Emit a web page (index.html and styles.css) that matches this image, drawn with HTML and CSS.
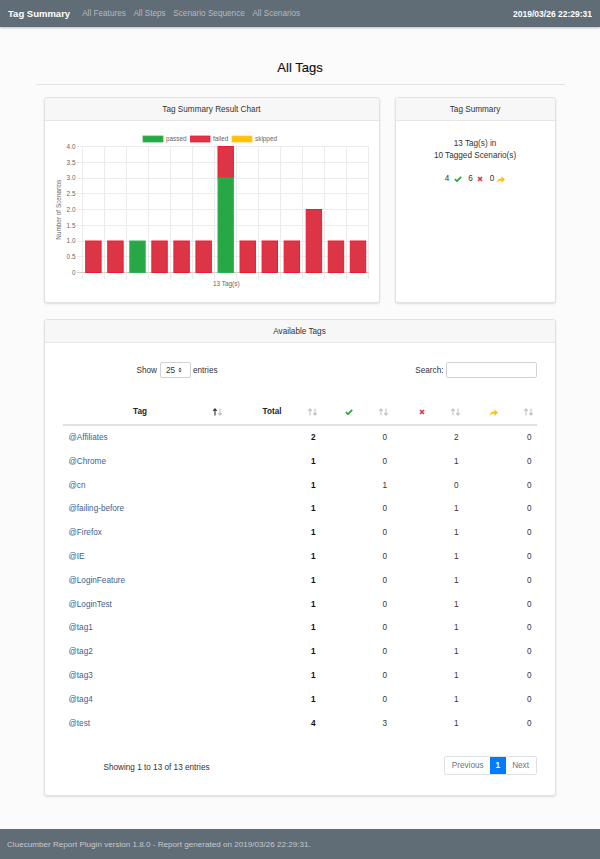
FILE: index.html
```html
<!DOCTYPE html>
<html lang="en">
<head>
<meta charset="utf-8">
<title>Tag Summary</title>
<link rel="stylesheet" href="styles.css">
</head>
<body>
<nav class="topbar">
  <a class="brand">Tag Summary</a>
  <div class="nav-links">
    <a>All Features</a>
    <a>All Steps</a>
    <a>Scenario Sequence</a>
    <a>All Scenarios</a>
  </div>
  <span class="stamp">2019/03/26 22:29:31</span>
</nav>

<main class="container">
  <h1 class="page-title">All Tags</h1>
  <hr class="rule">

  <div class="top-row">
    <section class="card chart-card">
      <header class="card-header">Tag Summary Result Chart</header>
      <div class="chart-body">
        <svg class="chart" viewBox="45 121 334 181" width="334" height="181">
          <g class="legend">
            <rect x="143" y="136" width="20" height="6" fill="#28a745" stroke="#2fb34e" stroke-width="0.8"/>
            <text x="166" y="141">passed</text>
            <rect x="190.5" y="136" width="19.5" height="6" fill="#dc3545" stroke="#ee1b2e" stroke-width="0.8"/>
            <text x="213" y="141">failed</text>
            <rect x="232" y="136" width="20" height="6" fill="#ffc107" stroke="#ffcb2e" stroke-width="0.8"/>
            <text x="255" y="141">skipped</text>
          </g>
          <g class="grid">
            <path d="M77 146.5H369M77 162.5H369M77 178.5H369M77 193.5H369M77 209.5H369M77 225.5H369M77 241.5H369M77 256.5H369"/>
            <path d="M82.5 146.5V279M104.5 146.5V279M126.5 146.5V279M148.5 146.5V279M170.5 146.5V279M192.5 146.5V279M214.5 146.5V279M236.5 146.5V279M258.5 146.5V279M280.5 146.5V279M302.5 146.5V279M324.5 146.5V279M346.5 146.5V279M368.5 146.5V279"/>
          </g>
          <path class="zero" d="M77 272.5H369"/>
          <g class="ticks">
            <text x="75.5" y="148.8">4.0</text>
            <text x="75.5" y="164.6">3.5</text>
            <text x="75.5" y="180.3">3.0</text>
            <text x="75.5" y="196.1">2.5</text>
            <text x="75.5" y="211.8">2.0</text>
            <text x="75.5" y="227.6">1.5</text>
            <text x="75.5" y="243.3">1.0</text>
            <text x="75.5" y="259.1">0.5</text>
            <text x="75.5" y="274.8">0</text>
          </g>
          <g class="bars-failed">
            <rect x="85.7" y="241" width="15.4" height="31.5"/>
            <rect x="107.75" y="241" width="15.4" height="31.5"/>
            <rect x="151.85" y="241" width="15.4" height="31.5"/>
            <rect x="173.9" y="241" width="15.4" height="31.5"/>
            <rect x="195.95" y="241" width="15.4" height="31.5"/>
            <rect x="218" y="146.5" width="15.4" height="31.5"/>
            <rect x="240.05" y="241" width="15.4" height="31.5"/>
            <rect x="262.1" y="241" width="15.4" height="31.5"/>
            <rect x="284.15" y="241" width="15.4" height="31.5"/>
            <rect x="306.2" y="209.5" width="15.4" height="63"/>
            <rect x="328.25" y="241" width="15.4" height="31.5"/>
            <rect x="350.3" y="241" width="15.4" height="31.5"/>
          </g>
          <g class="bars-passed">
            <rect x="129.8" y="241" width="15.4" height="31.5"/>
            <rect x="218" y="178" width="15.4" height="94.5"/>
          </g>
          <text class="axis-label" x="226.3" y="285.6" text-anchor="middle">13 Tag(s)</text>
          <text class="axis-label" x="59" y="212" text-anchor="middle" transform="rotate(-90 59 209.7)">Number of Scenarios</text>
        </svg>
      </div>
    </section>

    <section class="card summary-card">
      <header class="card-header">Tag Summary</header>
      <div class="summary-body">
        <p class="summary-text">13 Tag(s) in<br>10 Tagged Scenario(s)</p>
        <div class="counts">
          <span>4</span>
          <svg class="ic ic-check" viewBox="0 0 8 6" width="8" height="6"><path d="M0.8 3.1L3 5.1L7.2 0.8"/></svg>
          <span>6</span>
          <svg class="ic ic-x" viewBox="0 0 6 6" width="6" height="6"><path d="M1 1L5 5M5 1L1 5"/></svg>
          <span>0</span>
          <svg class="ic ic-skip" viewBox="0 0 9 7" width="9" height="7"><path d="M0.5 7C0.8 4 2.8 2.6 5.5 2.6V0.3L9 3.6L5.5 6.9V4.6C3.4 4.6 1.7 5.3 0.5 7Z"/></svg>
        </div>
      </div>
    </section>
  </div>

  <section class="card tags-card">
    <header class="card-header">Available Tags</header>
    <div class="tags-body">
      <div class="controls">
        <div class="length">
          <span>Show</span>
          <span class="select-box"><span>25</span>
            <svg class="caret" viewBox="0 0 4 6" width="4" height="6"><path d="M0.3 2.4L2 0.6L3.7 2.4ZM0.3 3.6L2 5.4L3.7 3.6Z"/></svg>
          </span>
          <span>entries</span>
        </div>
        <label class="filter">Search: <input class="search" type="text"></label>
      </div>

      <table class="tags-table">
        <colgroup>
          <col class="c-tag"><col class="c-total"><col class="c-num"><col class="c-num"><col class="c-skip">
        </colgroup>
        <thead>
          <tr>
            <th class="th-tag"><div class="th-in"><span class="lbl">Tag</span>
              <svg class="sort asc" viewBox="0 0 9 8" width="9" height="8"><path class="up" d="M2 7.5V1M0.3 2.8L2 0.9L3.7 2.8"/><path class="down" d="M7 0.5V7M5.3 5.2L7 7.1L8.7 5.2"/></svg></div></th>
            <th><div class="th-in num"><span class="lbl">Total</span>
              <svg class="sort" viewBox="0 0 9 8" width="9" height="8"><path class="up" d="M2 7.5V1M0.3 2.8L2 0.9L3.7 2.8"/><path class="down" d="M7 0.5V7M5.3 5.2L7 7.1L8.7 5.2"/></svg></div></th>
            <th><div class="th-in num"><svg class="ic ic-check" viewBox="0 0 8 6" width="8" height="6"><path d="M0.8 3.1L3 5.1L7.2 0.8"/></svg>
              <svg class="sort" viewBox="0 0 9 8" width="9" height="8"><path class="up" d="M2 7.5V1M0.3 2.8L2 0.9L3.7 2.8"/><path class="down" d="M7 0.5V7M5.3 5.2L7 7.1L8.7 5.2"/></svg></div></th>
            <th><div class="th-in num"><svg class="ic ic-x" viewBox="0 0 6 6" width="6" height="6"><path d="M1 1L5 5M5 1L1 5"/></svg>
              <svg class="sort" viewBox="0 0 9 8" width="9" height="8"><path class="up" d="M2 7.5V1M0.3 2.8L2 0.9L3.7 2.8"/><path class="down" d="M7 0.5V7M5.3 5.2L7 7.1L8.7 5.2"/></svg></div></th>
            <th><div class="th-in num"><svg class="ic ic-skip" viewBox="0 0 9 7" width="9" height="7"><path d="M0.5 7C0.8 4 2.8 2.6 5.5 2.6V0.3L9 3.6L5.5 6.9V4.6C3.4 4.6 1.7 5.3 0.5 7Z"/></svg>
              <svg class="sort" viewBox="0 0 9 8" width="9" height="8"><path class="up" d="M2 7.5V1M0.3 2.8L2 0.9L3.7 2.8"/><path class="down" d="M7 0.5V7M5.3 5.2L7 7.1L8.7 5.2"/></svg></div></th>
          </tr>
        </thead>
        <tbody>
          <tr><td><a class="tag">@Affiliates</a></td><td class="total">2</td><td>0</td><td>2</td><td>0</td></tr>
          <tr><td><a class="tag">@Chrome</a></td><td class="total">1</td><td>0</td><td>1</td><td>0</td></tr>
          <tr><td><a class="tag">@cn</a></td><td class="total">1</td><td>1</td><td>0</td><td>0</td></tr>
          <tr><td><a class="tag">@failing-before</a></td><td class="total">1</td><td>0</td><td>1</td><td>0</td></tr>
          <tr><td><a class="tag">@Firefox</a></td><td class="total">1</td><td>0</td><td>1</td><td>0</td></tr>
          <tr><td><a class="tag">@IE</a></td><td class="total">1</td><td>0</td><td>1</td><td>0</td></tr>
          <tr><td><a class="tag">@LoginFeature</a></td><td class="total">1</td><td>0</td><td>1</td><td>0</td></tr>
          <tr><td><a class="tag">@LoginTest</a></td><td class="total">1</td><td>0</td><td>1</td><td>0</td></tr>
          <tr><td><a class="tag">@tag1</a></td><td class="total">1</td><td>0</td><td>1</td><td>0</td></tr>
          <tr><td><a class="tag">@tag2</a></td><td class="total">1</td><td>0</td><td>1</td><td>0</td></tr>
          <tr><td><a class="tag">@tag3</a></td><td class="total">1</td><td>0</td><td>1</td><td>0</td></tr>
          <tr><td><a class="tag">@tag4</a></td><td class="total">1</td><td>0</td><td>1</td><td>0</td></tr>
          <tr><td><a class="tag">@test</a></td><td class="total">4</td><td>3</td><td>1</td><td>0</td></tr>
        </tbody>
      </table>

      <div class="table-foot">
        <div class="info">Showing 1 to 13 of 13 entries</div>
        <div class="pagination">
          <span class="page disabled">Previous</span>
          <span class="page active">1</span>
          <span class="page disabled">Next</span>
        </div>
      </div>
    </div>
  </section>
</main>

<footer class="footer">Cluecumber Report Plugin version 1.8.0 - Report generated on 2019/03/26 22:29:31.</footer>
</body>
</html>
```

FILE: styles.css
```css
* { box-sizing: border-box; }
html, body { margin: 0; }
body {
  background: #fbfbfb;
  font-family: "Liberation Sans", Arial, sans-serif;
  font-size: 8.2px;
  color: #333;
  min-height: 100vh;
  display: flex;
  flex-direction: column;
}

/* top navigation */
.topbar {
  flex: none;
  height: 27px;
  background: #606c76;
  display: flex;
  align-items: center;
  padding: 0 8px;
  box-shadow: 0 1px 2px rgba(0, 0, 0, 0.25);
}
.brand { color: #fff; font-weight: bold; font-size: 9.5px; margin-right: 12px; }
.nav-links { display: flex; gap: 7.6px; }
.nav-links a { color: #b5bbc0; font-size: 8.2px; }
.stamp { margin-left: auto; color: #fff; font-weight: bold; font-size: 8.5px; }

/* page */
.container { flex: none; width: 529px; margin: 0 auto; padding-top: 32.5px; }
.page-title {
  margin: 0;
  font-size: 13px;
  line-height: 16px;
  font-weight: normal;
  text-align: center;
  color: #111;
  -webkit-text-stroke: 0.15px #111;
}
.rule { margin: 8.5px 0 0; border: 0; border-top: 1px solid #e4e4e4; height: 0; }

.card {
  background: #fff;
  border: 1px solid #e2e2e2;
  border-radius: 3px;
  box-shadow: 0 1px 2px rgba(0, 0, 0, 0.12);
  overflow: hidden;
}
.card-header {
  height: 23px;
  padding-top: 2px;
  line-height: 20px;
  background: #f7f7f7;
  border-bottom: 1px solid #e6e6e6;
  text-align: center;
  color: #333;
}

.top-row {
  display: flex;
  gap: 15px;
  margin-top: 12px;
  padding: 0 9px 0 8px;
  height: 206px;
}
.chart-card { width: 336px; }
.summary-card { width: 161px; }

.chart-body { height: 181px; }
.chart { display: block; }
.chart text { font-family: "Liberation Sans", Arial, sans-serif; font-size: 6.4px; fill: #666; }
.chart .ticks text { text-anchor: end; }
.chart .grid path { stroke: #ebebeb; stroke-width: 1; fill: none; }
.chart .zero { stroke: #cfcfcf; stroke-width: 1; fill: none; }
.chart .bars-failed rect { fill: #dc3545; stroke: #ee1b2e; stroke-width: 1; }
.chart .bars-passed rect { fill: #28a745; stroke: #2fb34e; stroke-width: 1; }

.summary-body { text-align: center; padding-top: 16.5px; line-height: 12.3px; }
.summary-text { margin: 0; }
.counts {
  display: flex;
  justify-content: center;
  align-items: center;
  gap: 4px;
  margin-top: 11px;
  height: 12.3px;
}
.counts .ic-check { margin-left: 1px; margin-right: 2px; }
.counts .ic-x { margin-right: 3px; }
.counts .ic-skip { margin-left: -2px; }

.ic { display: block; }
.ic-check path { fill: none; stroke: #28a745; stroke-width: 1.8; }
.ic-x path { fill: none; stroke: #dc3545; stroke-width: 1.6; }
.ic-skip path { fill: #ffc107; }

/* available tags */
.tags-card { margin: 16px 9px 0 8px; }
.tags-body { padding: 19px 18px 20px; }

.controls { display: flex; justify-content: space-between; align-items: center; height: 16px; }
.length { display: flex; align-items: center; gap: 3px; padding-left: 74px; }
.select-box {
  width: 31px;
  height: 16px;
  border: 1px solid #d2d2d2;
  border-radius: 2px;
  display: flex;
  align-items: center;
  justify-content: space-between;
  padding: 0 8px 0 5px;
  margin-right: -1px;
}
.caret { display: block; }
.caret path { fill: #555; }
.filter { display: flex; align-items: center; gap: 2px; }
.search {
  width: 91px;
  height: 16px;
  border: 1px solid #d2d2d2;
  border-radius: 2px;
  margin: 0;
  padding: 0 4px;
  font: inherit;
  background: #fff;
}

.tags-table {
  width: 100%;
  margin-top: 21px;
  border-collapse: collapse;
  table-layout: fixed;
}
.c-tag { width: 163px; }
.c-total { width: 95px; }
.c-num { width: 71.5px; }
.c-skip { width: 73px; }

.tags-table th {
  padding: 8px 4px 7px 5px;
  line-height: 10px;
  border-bottom: 2px solid #dee2e6;
  font-weight: bold;
  color: #212529;
}
.th-in { display: flex; align-items: center; height: 10px; }
.th-tag .lbl { flex: 1; text-align: center; }
.th-in.num { justify-content: flex-end; gap: 26px; }
.sort { display: block; }
.sort path { fill: none; stroke: #c2c2c2; stroke-width: 1.1; }
.sort.asc .up { stroke: #333; }

.tags-table td {
  padding: 7px 5px;
  line-height: 9.8px;
  text-align: right;
  color: #333;
}
.tags-table td:first-child { text-align: left; padding-left: 6px; }
.tags-table td.total { font-weight: bold; color: #111; }
.tag { color: #3e5f8e; }

.table-foot {
  display: flex;
  justify-content: space-between;
  align-items: center;
  margin-top: 21px;
}
.info { padding-left: 41px; padding-top: 4px; }
.pagination {
  display: flex;
  height: 19px;
  border: 1px solid #dee2e6;
  border-radius: 2px;
  overflow: hidden;
}
.page { padding: 0 6.5px; line-height: 17px; color: #6c757d; }
.page.active { background: #007bff; color: #fff; padding: 0 5.5px; font-weight: bold; }

.footer {
  flex: none;
  margin-top: auto;
  height: 30px;
  background: #606c76;
  color: #c6cbcf;
  display: flex;
  align-items: center;
  padding-left: 7px;
  font-size: 8.1px;
}
```
